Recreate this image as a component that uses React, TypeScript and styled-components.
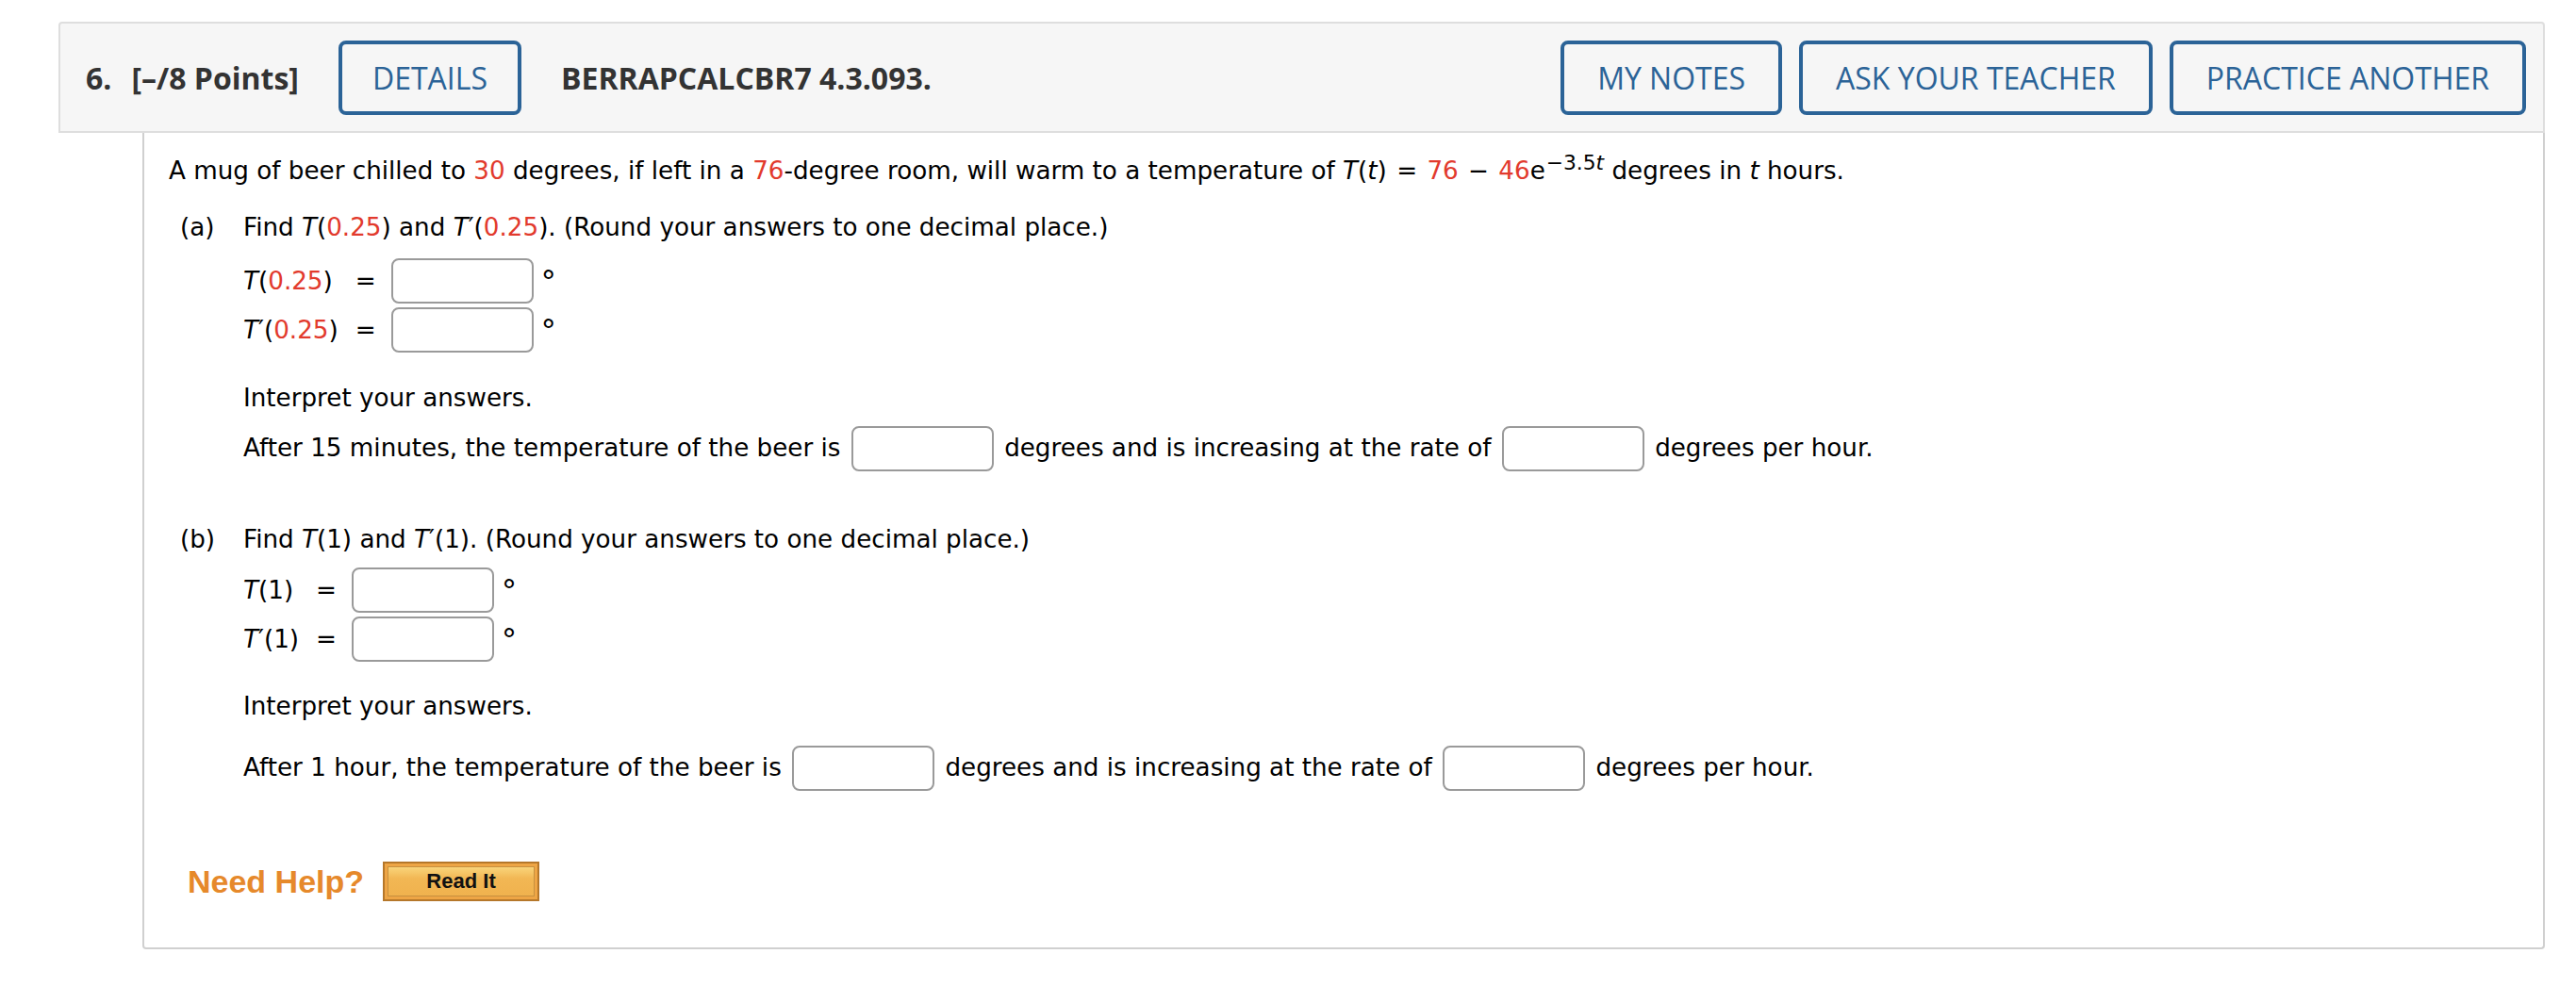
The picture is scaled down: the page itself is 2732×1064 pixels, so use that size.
import React from "react";
import styled, { createGlobalStyle } from "styled-components";

const GlobalStyle = createGlobalStyle`
  html, body {
    margin: 0;
    padding: 0;
    background: #fff;
  }
  body {
    font-family: "DejaVu Sans", Verdana, sans-serif;
  }
`;

const Page = styled.div`
  width: 2637px;
  padding: 23px 0 0 62px;
`;

const Header = styled.div`
  box-sizing: border-box;
  height: 118px;
  display: flex;
  align-items: center;
  padding: 0 18px 0 27px;
  background: #f6f6f6;
  border: 2px solid #dedede;
  border-radius: 4px 4px 0 0;
  font-family: "Open Sans", sans-serif;
  font-size: 32px;
  color: #333;
`;

const Number = styled.span`
  font-weight: 700;
  margin-right: 21px;
`;

const Points = styled.span`
  font-weight: 700;
  margin-right: 42px;
`;

const Code = styled.span`
  font-weight: 700;
  margin-left: 42px;
`;

const Actions = styled.div`
  display: flex;
  gap: 18px;
  margin-left: auto;
`;

const HeaderButton = styled.button<{ $pad?: number }>`
  box-sizing: border-box;
  height: 79px;
  padding: 0 ${(p) => p.$pad ?? 32}px;
  border: 4px solid #2b6397;
  border-radius: 8px;
  background: transparent;
  color: #2b6397;
  font-family: "Open Sans", sans-serif;
  font-size: 32px;
  font-weight: 400;
  white-space: nowrap;
`;

const Panel = styled.div`
  margin-left: 89px;
  border: 2px solid #d0d0d0;
  border-top: none;
  border-radius: 0 0 4px 4px;
  padding: 22px 0 49px 26px;
  font-size: 26.2px;
  line-height: 36px;
  color: #000;
`;

const Para = styled.p`
  margin: 0;
  white-space: nowrap;
`;

const Red = styled.span`
  color: #e23a2d;
`;

const I = styled.i`
  font-style: italic;
`;

const Op = styled.span`
  margin: 0 2px;
`;

const Sup = styled.sup`
  font-size: 0.83em;
  line-height: 0;
  margin-left: 1px;
`;

const Part = styled.div<{ $gap: number }>`
  display: grid;
  grid-template-columns: 67px 1fr;
  margin: ${(p) => p.$gap}px 0 0 12px;
`;

const PartLabel = styled.span``;

const PartBody = styled.div``;

const AnswerGrid = styled.div<{ $gap: number }>`
  display: grid;
  grid-template-columns: max-content max-content max-content max-content;
  grid-auto-rows: 48px;
  row-gap: 4px;
  align-items: center;
  margin-top: ${(p) => p.$gap}px;
`;

const Eq = styled.span`
  margin: 0 16px 0 18px;
`;

const Blank = styled.input`
  box-sizing: border-box;
  width: 151px;
  height: 48px;
  border: 2px solid #9a9a9a;
  border-radius: 8px;
  background: #fff;
  vertical-align: middle;
  margin: 0 3px;
  padding: 0 8px;
  font: inherit;
`;

const RowBlank = styled(Blank)`
  margin: 0;
`;

const Degree = styled.span`
  align-self: start;
  margin: 7px 0 0 8px;
  font-size: 32px;
  line-height: 36px;
`;

const Spaced = styled(Para)<{ $gap: number }>`
  margin-top: ${(p) => p.$gap}px;
`;

const HelpRow = styled.div`
  display: flex;
  align-items: center;
  margin: 75px 0 0 20px;
`;

const HelpText = styled.span`
  font-family: "Liberation Sans", Arial, sans-serif;
  font-weight: 700;
  font-size: 34px;
  color: #e6892b;
  margin-right: 20px;
`;

const ReadIt = styled.button`
  box-sizing: border-box;
  width: 166px;
  height: 42px;
  padding: 3px;
  border: 2px solid #b5772a;
  background: #eea545;
`;

const ReadItFace = styled.span`
  box-sizing: border-box;
  display: flex;
  align-items: center;
  justify-content: center;
  height: 100%;
  border: 1px solid #c7903f;
  background: linear-gradient(#f9d47a, #f2b754 40%, #f0b24e);
  font-family: "Liberation Sans", Arial, sans-serif;
  font-weight: 700;
  font-size: 22px;
  color: #111;
`;

function AnswerRows({ labels, gap }: { labels: React.ReactNode[]; gap: number }) {
  return (
    <AnswerGrid $gap={gap}>
      {labels.map((label, i) => (
        <React.Fragment key={i}>
          <span>{label}</span>
          <Eq>=</Eq>
          <RowBlank type="text" />
          <Degree>°</Degree>
        </React.Fragment>
      ))}
    </AnswerGrid>
  );
}

export default function App() {
  return (
    <Page>
      <GlobalStyle />
      <Header>
        <Number>6.</Number>
        <Points>[–/8 Points]</Points>
        <HeaderButton>DETAILS</HeaderButton>
        <Code>BERRAPCALCBR7 4.3.093.</Code>
        <Actions>
          <HeaderButton $pad={35}>MY NOTES</HeaderButton>
          <HeaderButton $pad={35}>ASK YOUR TEACHER</HeaderButton>
          <HeaderButton $pad={35}>PRACTICE ANOTHER</HeaderButton>
        </Actions>
      </Header>

      <Panel>
        <Para>
          A mug of beer chilled to <Red>30</Red> degrees, if left in a{" "}
          <Red>76</Red>-degree room, will warm to a temperature of <I>T</I>(
          <I>t</I>) <Op>=</Op> <Red>76</Red> <Op>−</Op> <Red>46</Red>e
          <Sup>
            −3.5<I>t</I>
          </Sup>{" "}
          degrees in <I>t</I> hours.
        </Para>

        <Part $gap={24}>
          <PartLabel>(a)</PartLabel>
          <PartBody>
            <Para>
              Find <I>T</I>(<Red>0.25</Red>) and <I>T</I>′(<Red>0.25</Red>).
              (Round your answers to one decimal place.)
            </Para>
            <AnswerRows
              gap={15}
              labels={[
                <><I>T</I>(<Red>0.25</Red>)</>,
                <><I>T</I>′(<Red>0.25</Red>)</>,
              ]}
            />
            <Spaced $gap={30}>Interpret your answers.</Spaced>
            <Spaced $gap={12}>
              After 15 minutes, the temperature of the beer is <Blank type="text" />{" "}
              degrees and is increasing at the rate of <Blank type="text" /> degrees
              per hour.
            </Spaced>
          </PartBody>
        </Part>

        <Part $gap={54}>
          <PartLabel>(b)</PartLabel>
          <PartBody>
            <Para>
              Find <I>T</I>(1) and <I>T</I>′(1). (Round your answers to one
              decimal place.)
            </Para>
            <AnswerRows
              gap={12}
              labels={[<><I>T</I>(1)</>, <><I>T</I>′(1)</>]}
            />
            <Spaced $gap={29}>Interpret your answers.</Spaced>
            <Spaced $gap={24}>
              After 1 hour, the temperature of the beer is <Blank type="text" />{" "}
              degrees and is increasing at the rate of <Blank type="text" /> degrees
              per hour.
            </Spaced>
          </PartBody>
        </Part>

        <HelpRow>
          <HelpText>Need Help?</HelpText>
          <ReadIt>
            <ReadItFace>Read It</ReadItFace>
          </ReadIt>
        </HelpRow>
      </Panel>
    </Page>
  );
}
